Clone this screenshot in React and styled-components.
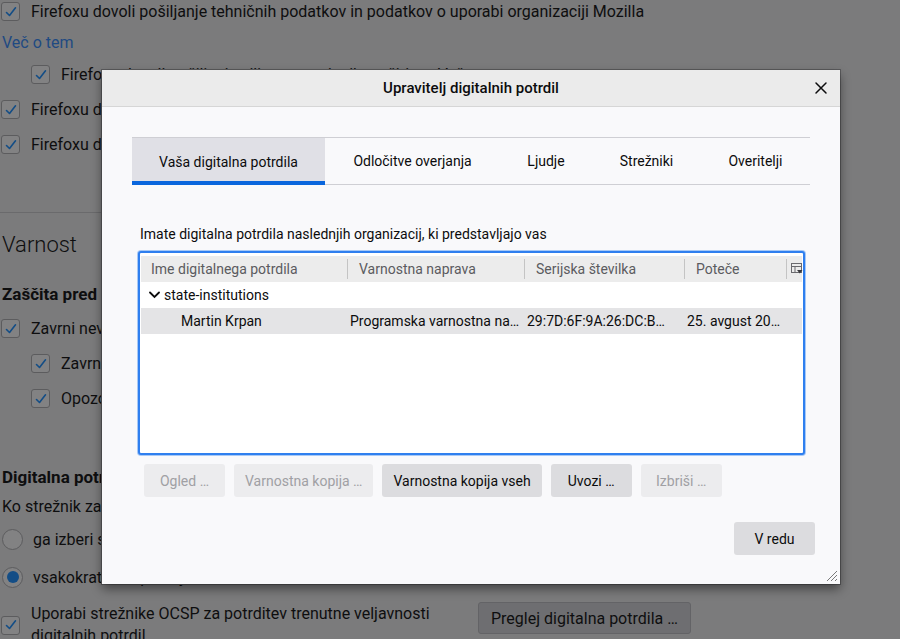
import React from 'react';
import styled, { createGlobalStyle } from 'styled-components';

// colours of the preferences page as seen through the modal's dark scrim
const dim = {
  bg: '#7b7b7c',
  text: '#0e0e0f',
  link: '#1f4a82',
  boxBg: '#828283',
  boxBorder: '#5c5c5e',
  tick: '#134d86',
  rule: '#6a6a6c',
  btnBg: '#6e6e71',
  btnBorder: '#636366',
};

const GlobalStyle = createGlobalStyle`
  html, body {
    margin: 0;
    padding: 0;
    width: 900px;
    height: 639px;
    overflow: hidden;
    background: ${dim.bg};
    font-family: Roboto, "Noto Sans", sans-serif;
  }
`;

const Page = styled.div`
  position: relative;
  width: 900px;
  height: 639px;
  overflow: hidden;
  background-color: ${dim.bg};
`;

const Prefs = styled.div`
  display: flex;
  flex-direction: column;
  margin-top: -6px;
  color: ${dim.text};
  font-size: 16px;
`;

const CheckRow = styled.div`
  display: flex;
  align-items: center;
  height: ${(p) => (p.$tall ? 44 : 35)}px;
  padding-left: ${(p) => (p.$indent ? 31 : 1)}px;
  padding-top: ${(p) => (p.$tall ? 7 : 0)}px;
  gap: 11px;
  white-space: nowrap;
`;

const Box = styled.span`
  flex: none;
  width: 17px;
  height: 17px;
  border: 1px solid ${dim.boxBorder};
  border-radius: 3px;
  background: ${dim.boxBg};
  display: flex;
  align-items: center;
  justify-content: center;
`;

const Radio = styled.span`
  flex: none;
  width: 19px;
  height: 19px;
  border: 1px solid ${dim.boxBorder};
  border-radius: 50%;
  background: ${dim.boxBg};
  display: flex;
  align-items: center;
  justify-content: center;
  &::after {
    content: '';
    width: 12px;
    height: 12px;
    border-radius: 50%;
    background: ${(p) => (p.$on ? dim.tick : 'transparent')};
  }
`;

const Link = styled.a`
  color: ${dim.link};
  text-decoration: none;
  height: 28px;
  line-height: 28px;
  padding-left: 2px;
`;

const Divider = styled.hr`
  margin: 50px 0 0;
  border: none;
  border-top: 1px solid ${dim.rule};
  width: 700px;
`;

const Heading = styled.h1`
  margin: 0;
  height: 64px;
  line-height: 64px;
  font-size: 22px;
  font-weight: 300;
  padding-left: 2px;
`;

const SubHeading = styled.h2`
  margin: ${(p) => (p.$gap ? 44 : 0)}px 0 0;
  height: 34px;
  line-height: 34px;
  font-size: 17px;
  font-weight: 700;
  padding-left: 2px;
  white-space: nowrap;
`;

const Plain = styled.div`
  height: 26px;
  line-height: 26px;
  padding-left: 2px;
  white-space: nowrap;
`;

const RadioRow = styled.div`
  display: flex;
  align-items: center;
  height: 38px;
  gap: 10px;
  padding-left: 2px;
  white-space: nowrap;
`;

const WrapText = styled.span`
  width: 420px;
  white-space: normal;
  line-height: 22px;
`;

const PageButton = styled.button`
  align-self: flex-start;
  margin-left: 16px;
  margin-top: -1px;
  height: 32px;
  padding: 0 12px;
  border: 1px solid ${dim.btnBorder};
  border-radius: 3px;
  background: ${dim.btnBg};
  color: ${dim.text};
  font: inherit;
`;

const Dialog = styled.div`
  position: absolute;
  left: 102px;
  top: 70px;
  z-index: 2;
  width: 738px;
  height: 514px;
  background: #f9f9fb;
  box-shadow: 0 5px 10px rgba(0, 0, 0, 0.45), 0 0 0 1px #5a5a5c;
  display: flex;
  flex-direction: column;
  font-size: 14px;
  color: #0c0c0d;
`;

const TitleBar = styled.div`
  flex: none;
  display: grid;
  grid-template-columns: 1fr auto 1fr;
  align-items: center;
  height: 36px;
  background: #ebebeb;
  border-bottom: 1px solid #d6d6d6;
  font-size: 15px;
  font-weight: 500;
`;

const Close = styled.button`
  justify-self: end;
  margin-right: 12px;
  width: 14px;
  height: 14px;
  padding: 0;
  border: none;
  background: none;
  display: flex;
`;

const Body = styled.div`
  flex: 1;
  display: flex;
  flex-direction: column;
  padding: 30px 30px 0;
  position: relative;
`;

const Tabs = styled.div`
  display: flex;
  height: 46px;
  border-top: 1px solid #cfcfd4;
  border-bottom: 1px solid #cfcfd4;
`;

const Tab = styled.div`
  display: flex;
  align-items: center;
  justify-content: center;
  flex: ${(p) => p.$grow};
  background: ${(p) => (p.$active ? '#e0e0e6' : 'transparent')};
  box-shadow: ${(p) => (p.$active ? 'inset 0 -4px 0 #0a66dd' : 'none')};
  margin-bottom: ${(p) => (p.$active ? '-1px' : '0')};
  white-space: nowrap;
`;

const Caption = styled.div`
  margin-top: 41px;
  padding-left: 8px;
  line-height: 17px;
`;

const Tree = styled.div`
  margin: 8px 5px 0 6px;
  height: 196px;
  border: 2px solid #2f7fef;
  border-radius: 3px;
  box-shadow: 0 0 0 1px #a8c9f6;
  background: #fff;
  padding: 3px 1px 1px;
  overflow: hidden;
`;

const Grid = styled.div`
  display: grid;
  grid-template-columns: 207px 177px 160px 102px 1fr;
  height: 26px;
  align-items: center;
  background: ${(p) => p.$bg || 'transparent'};
  white-space: nowrap;
`;

const HeadCell = styled.div`
  align-self: stretch;
  display: flex;
  align-items: center;
  margin: 3px 0;
  padding-left: ${(p) => (p.$first ? 10 : p.$last ? 4 : 11)}px;
  border-right: ${(p) => (p.$last ? 'none' : '1px solid #c4c4c4')};
  color: #5b5b5f;
`;

const Cell = styled.div`
  padding-left: ${(p) => p.$pad || 2}px;
  overflow: hidden;
  text-overflow: ellipsis;
  display: flex;
  align-items: center;
`;

const GroupRow = styled.div`
  display: flex;
  align-items: center;
  gap: 4px;
  height: 26px;
  padding-left: 8px;
`;

const ButtonRow = styled.div`
  display: flex;
  gap: 9px;
  margin-top: 9px;
  padding-left: 12px;
`;

const Button = styled.button`
  height: 33px;
  min-width: 81px;
  padding: 0 11px;
  border: none;
  border-radius: 3px;
  background: ${(p) => (p.disabled ? '#ececee' : '#dcdcdf')};
  color: ${(p) => (p.disabled ? '#a0a0a4' : '#0c0c0d')};
  font: inherit;
  font-size: 14px;
`;

const Footer = styled.div`
  display: flex;
  justify-content: flex-end;
  margin: 25px -5px 0 0;
`;

const Grip = styled.svg`
  position: absolute;
  right: 2px;
  bottom: 2px;
`;

const Check = () => (
  <svg width="12" height="12" viewBox="0 0 12 12">
    <path d="M1.5 6.5 L4.5 9.5 L10.5 1.8" fill="none" stroke={dim.tick} strokeWidth="1.6" strokeLinecap="round" strokeLinejoin="round" />
  </svg>
);

const CheckItem = ({ indent, tall, children }) => (
  <CheckRow $indent={indent} $tall={tall}>
    <Box>
      <Check />
    </Box>
    {children}
  </CheckRow>
);

const Chevron = () => (
  <svg width="11" height="8" viewBox="0 0 11 8">
    <path d="M1 1.5 L5.5 6 L10 1.5" fill="none" stroke="#0c0c0d" strokeWidth="1.8" strokeLinecap="round" />
  </svg>
);

const ColumnPicker = () => (
  <svg width="12" height="12" viewBox="0 0 12 12">
    <rect x="0.5" y="0.5" width="10" height="9" fill="none" stroke="#6a6a6e" />
    <path d="M0.5 3.5 H10.5 M4 3.5 V9.5" stroke="#6a6a6e" />
    <path d="M6 7 H11.5 L8.75 10.5 Z" fill="#3a3a3e" />
  </svg>
);

const tabs = [
  { label: 'Vaša digitalna potrdila', grow: '0 0 193px', active: true },
  { label: 'Odločitve overjanja', grow: '0 0 175px' },
  { label: 'Ljudje', grow: '0 0 92px' },
  { label: 'Strežniki', grow: '0 0 109px' },
  { label: 'Overitelji', grow: '1' },
];

const actions = [
  { label: 'Ogled …', disabled: true },
  { label: 'Varnostna kopija …', disabled: true },
  { label: 'Varnostna kopija vseh' },
  { label: 'Uvozi …' },
  { label: 'Izbriši …', disabled: true },
];

export default function App() {
  return (
    <Page>
      <GlobalStyle />
      <Prefs>
        <CheckItem>Firefoxu dovoli pošiljanje tehničnih podatkov in podatkov o uporabi organizaciji Mozilla</CheckItem>
        <Link href="#">Več o tem</Link>
        <CheckItem indent>Firefoxu dovoli pošiljanje ciljno usmerjenih razširitev. Več o tem</CheckItem>
        <CheckItem>Firefoxu dovoli nameščanje in izvajanje raziskav</CheckItem>
        <CheckItem>Firefoxu dovoli, da v vašem imenu pošilja nakopičena poročila o sesutju</CheckItem>
        <Divider />
        <Heading>Varnost</Heading>
        <SubHeading>Zaščita pred zavajajočo vsebino in nevarno programsko opremo</SubHeading>
        <CheckItem>Zavrni nevarno in zavajajočo vsebino</CheckItem>
        <CheckItem indent>Zavrni nevarne prenose</CheckItem>
        <CheckItem indent>Opozori na neželeno in neobičajno programsko opremo</CheckItem>
        <SubHeading $gap>Digitalna potrdila</SubHeading>
        <Plain>Ko strežnik zahteva vaše osebno digitalno potrdilo</Plain>
        <RadioRow>
          <Radio />
          ga izberi samodejno
        </RadioRow>
        <RadioRow>
          <Radio $on />
          vsakokrat me vprašaj
        </RadioRow>
        <CheckItem tall>
          <WrapText>Uporabi strežnike OCSP za potrditev trenutne veljavnosti digitalnih potrdil</WrapText>
          <PageButton>Preglej digitalna potrdila …</PageButton>
        </CheckItem>
      </Prefs>

      <Dialog>
        <TitleBar>
          <span />
          <span>Upravitelj digitalnih potrdil</span>
          <Close aria-label="Zapri">
            <svg width="14" height="14" viewBox="0 0 14 14">
              <path d="M2 2 L12 12 M12 2 L2 12" stroke="#0c0c0d" strokeWidth="1.5" strokeLinecap="round" />
            </svg>
          </Close>
        </TitleBar>
        <Body>
          <Tabs>
            {tabs.map((t) => (
              <Tab key={t.label} $active={t.active} $grow={t.grow}>
                {t.label}
              </Tab>
            ))}
          </Tabs>
          <Caption>Imate digitalna potrdila naslednjih organizacij, ki predstavljajo vas</Caption>
          <Tree>
            <Grid $bg="#ececec">
              <HeadCell $first>Ime digitalnega potrdila</HeadCell>
              <HeadCell>Varnostna naprava</HeadCell>
              <HeadCell>Serijska številka</HeadCell>
              <HeadCell>Poteče</HeadCell>
              <HeadCell $last>
                <ColumnPicker />
              </HeadCell>
            </Grid>
            <GroupRow>
              <Chevron />
              state-institutions
            </GroupRow>
            <Grid $bg="#e4e4e6">
              <Cell $pad={40}>Martin Krpan</Cell>
              <Cell>Programska varnostna na…</Cell>
              <Cell>29:7D:6F:9A:26:DC:B…</Cell>
              <Cell>25. avgust 20…</Cell>
              <Cell />
            </Grid>
          </Tree>
          <ButtonRow>
            {actions.map((a) => (
              <Button key={a.label} disabled={a.disabled}>
                {a.label}
              </Button>
            ))}
          </ButtonRow>
          <Footer>
            <Button>V redu</Button>
          </Footer>
          <Grip width="14" height="14" viewBox="0 0 14 14">
            <path d="M13 3 L3 13 M13 7 L7 13 M13 11 L11 13" stroke="#7a7a7a" strokeWidth="1" />
          </Grip>
        </Body>
      </Dialog>
    </Page>
  );
}
